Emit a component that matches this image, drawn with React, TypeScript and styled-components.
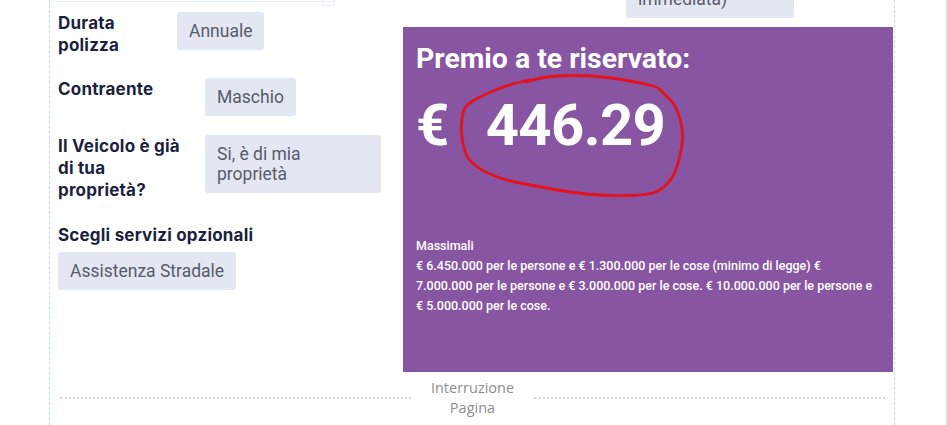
import React from 'react'
import styled, { createGlobalStyle } from 'styled-components'

const GlobalStyle = createGlobalStyle`
  html, body {
    margin: 0;
    padding: 0;
    background: #ffffff;
  }
  body {
    overflow: hidden;
  }
`

// punti del cerchio rosso (coordinate del pannello)
const circlePts: [number, number][] = [
  [123, 55], [138, 50], [171, 48], [205, 50], [238, 56], [255, 60], [260, 66],
  [271, 76], [278, 93], [280, 110], [278, 126], [273, 143], [268, 153],
  [258, 163], [245, 168], [205, 169], [171, 166], [138, 160], [105, 154],
  [81, 145], [65, 133], [59, 116], [58, 96], [61, 80], [71, 73], [85, 66],
  [105, 58], [126, 53],
]

function smoothPath(pts: [number, number][]) {
  let d = `M ${pts[0][0]} ${pts[0][1]}`
  for (let i = 1; i < pts.length - 1; i++) {
    const [x, y] = pts[i]
    const [nx, ny] = pts[i + 1]
    d += ` Q ${x} ${y} ${(x + nx) / 2} ${(y + ny) / 2}`
  }
  const last = pts[pts.length - 1]
  d += ` L ${last[0]} ${last[1]}`
  return d
}

function App() {
  return (
    <>
      <GlobalStyle />
      <ScPage>
        <ScCanvas>
          <ScLeftCol>
            <ScTopInput />
            <ScRow $mt={10}>
              <ScLabel $w={106}>Durata polizza</ScLabel>
              <ScChip>Annuale</ScChip>
            </ScRow>
            <ScRow $mt={22}>
              <ScLabel $w={134}>Contraente</ScLabel>
              <ScChip>Maschio</ScChip>
            </ScRow>
            <ScRow $mt={19}>
              <ScLabel $w={134}>Il Veicolo è già di tua proprietà?</ScLabel>
              <ScChip $w={176}>Si, è di mia proprietà</ScChip>
            </ScRow>
            <ScSection>
              <ScLabel>Scegli servizi opzionali</ScLabel>
              <ScChip>Assistenza Stradale</ScChip>
            </ScSection>
          </ScLeftCol>

          <ScRightCol>
            <ScTopChip>
              (Copertura
              <br />
              immediata)
            </ScTopChip>
            <ScPanel>
              <ScTitle>Premio a te riservato:</ScTitle>
              <ScPrice>
                €<ScAmount>446.29</ScAmount>
              </ScPrice>
              <ScInfo>
                Massimali
                <br />€ 6.450.000 per le persone e € 1.300.000 per le cose
                (minimo di legge) € 7.000.000 per le persone e € 3.000.000 per
                le cose. € 10.000.000 per le persone e € 5.000.000 per le cose.
              </ScInfo>
              <ScMark viewBox="0 0 490 345">
                <path
                  d={smoothPath(circlePts)}
                  fill="none"
                  stroke="#e3121c"
                  strokeWidth="2.8"
                  strokeLinecap="round"
                  strokeLinejoin="round"
                />
              </ScMark>
            </ScPanel>
          </ScRightCol>

          <ScPageBreak>
            <ScDots />
            <ScBreakLabel>
              Interruzione
              <br />
              Pagina
            </ScBreakLabel>
            <ScDots />
          </ScPageBreak>
        </ScCanvas>
      </ScPage>
    </>
  )
}

const ScPage = styled.div`
  width: 948px;
  height: 425px;
  overflow: hidden;
  box-sizing: border-box;
  border-right: 2px solid #dddddd;
  background: #ffffff;
`

const ScCanvas = styled.div`
  margin-top: -40px;
  margin-left: 49px;
  width: 846px;
  min-height: 480px;
  box-sizing: border-box;
  border-left: 1px dashed #c5dbe5;
  border-right: 1px dashed #c5dbe5;
  padding: 0 1px 0 8px;
  display: grid;
  grid-template-columns: 1fr 490px;
  column-gap: 12px;
  align-content: start;
`

const ScLeftCol = styled.div`
  display: flex;
  flex-direction: column;
  align-items: flex-start;
`

const ScTopInput = styled.div`
  position: relative;
  margin-left: -5px;
  width: 281px;
  height: 42px;
  box-sizing: border-box;
  border: 1px solid #e7ecf2;
  border-top: none;
  &::after {
    content: '';
    position: absolute;
    right: -2px;
    bottom: -5px;
    width: 11px;
    height: 7px;
    border: 1px solid #e7ecf2;
    border-top: none;
    border-radius: 0 0 2px 2px;
  }
`

const ScRow = styled.div<{ $mt: number }>`
  display: flex;
  align-items: flex-start;
  gap: 13px;
  margin-top: ${p => p.$mt}px;
`

const ScLabel = styled.div<{ $w?: number }>`
  width: ${p => (p.$w ? `${p.$w}px` : 'auto')};
  font-family: Inter, 'Noto Sans', sans-serif;
  font-weight: 700;
  font-size: 17px;
  letter-spacing: 0.2px;
  line-height: 22px;
  color: #1c1f3e;
`

const ScChip = styled.div<{ $w?: number }>`
  width: ${p => (p.$w ? `${p.$w}px` : 'auto')};
  box-sizing: border-box;
  padding: 9px 12px;
  background: #e3e7f1;
  border-radius: 3px;
  font-family: Roboto, 'Liberation Sans', sans-serif;
  font-size: 17.5px;
  line-height: 20px;
  color: #575c6b;
`

const ScSection = styled.div`
  margin-top: 23px;
  display: flex;
  flex-direction: column;
  align-items: flex-start;
  gap: 6px;
`

const ScRightCol = styled.div`
  display: flex;
  flex-direction: column;
`

const ScTopChip = styled(ScChip)`
  margin-left: 223px;
  width: 168px;
`

const ScPanel = styled.div`
  position: relative;
  margin-top: 9px;
  height: 345px;
  box-sizing: border-box;
  padding: 15px 13px;
  background: #8855a3;
  color: #ffffff;
  font-family: Roboto, 'Liberation Sans', sans-serif;
  display: flex;
  flex-direction: column;
`

const ScTitle = styled.div`
  font-weight: 700;
  font-size: 28.4px;
  line-height: 34px;
`

const ScPrice = styled.div`
  margin-top: 13px;
  font-weight: 700;
  font-size: 58px;
  letter-spacing: -0.6px;
  line-height: 72px;
`

const ScAmount = styled.span`
  margin-left: 37px;
`

const ScInfo = styled.div`
  margin-top: 75px;
  font-weight: 500;
  font-size: 12.5px;
  line-height: 20px;
`

const ScMark = styled.svg`
  position: absolute;
  left: 0;
  top: 0;
  width: 490px;
  height: 345px;
  pointer-events: none;
`

const ScPageBreak = styled.div`
  grid-column: 1 / -1;
  margin-top: 6px;
  padding: 0 8px 0 2px;
  display: flex;
  align-items: center;
`

const ScDots = styled.div`
  flex: 1;
  border-top: 2px dotted #d7d7d7;
`

const ScBreakLabel = styled.div`
  width: 123px;
  text-align: center;
  font-family: 'Open Sans', 'Noto Sans', sans-serif;
  font-size: 14.5px;
  line-height: 19.5px;
  color: #8e8e8e;
`

export default App
